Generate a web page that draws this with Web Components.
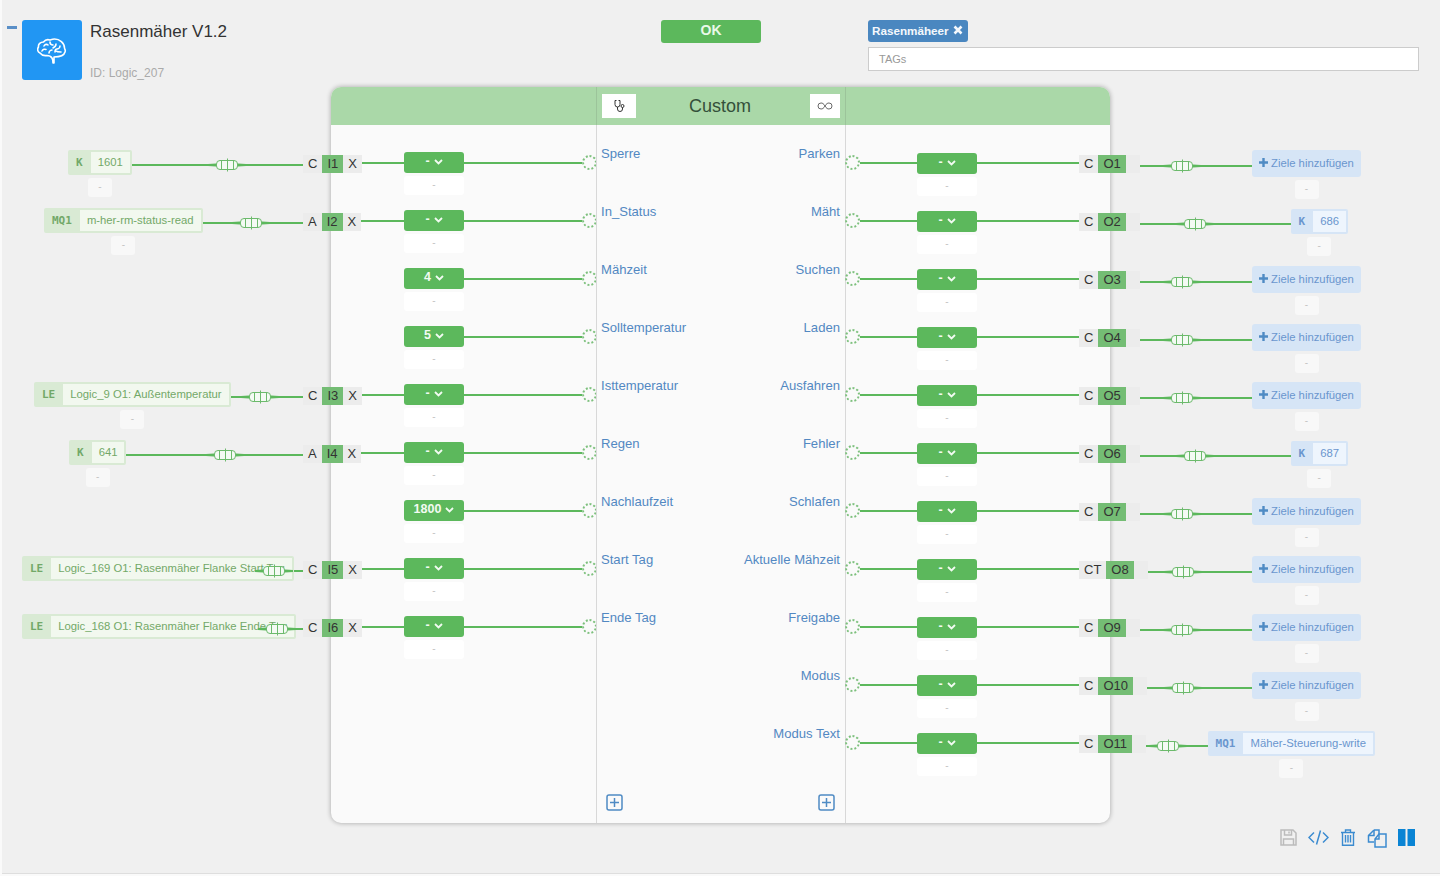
<!DOCTYPE html>
<html lang="de">
<head>
<meta charset="utf-8">
<title>Rasenmäher V1.2</title>
<style>
  html, body { margin: 0; background: #fafafa; overflow: hidden; }
  body { font-family: "Liberation Sans", Arial, sans-serif; }
</style>
</head>
<body>
<logic-node>
  <logic-head slot="head" title-text="Rasenmäher V1.2" logic-id="ID: Logic_207" tag="Rasenmäheer"></logic-head>
  <logic-block slot="block" title-text="Custom">
    <in-row slot="in" kind="K" name="1601" left="68" fuse="76" mode="C" port="I1"></in-row>
    <in-row slot="in" kind="MQ1" name="m-her-rm-status-read" left="44" fuse="52" mode="A" port="I2"></in-row>
    <in-row slot="in" value="4"></in-row>
    <in-row slot="in" value="5"></in-row>
    <in-row slot="in" kind="LE" name="Logic_9 O1: Außentemperatur" left="34" fuse="43" mode="C" port="I3"></in-row>
    <in-row slot="in" kind="K" name="641" left="69" fuse="78" mode="A" port="I4"></in-row>
    <in-row slot="in" value="1800"></in-row>
    <in-row slot="in" kind="LE" name="Logic_169 O1: Rasenmäher Flanke Start Tag" left="22" fuse="29" mode="C" port="I5" nosub></in-row>
    <in-row slot="in" kind="LE" name="Logic_168 O1: Rasenmäher Flanke Ende Tag" left="22" fuse="26" mode="C" port="I6" nosub></in-row>

    <pin-label slot="lab-l">Sperre</pin-label>
    <pin-label slot="lab-l">In_Status</pin-label>
    <pin-label slot="lab-l">Mähzeit</pin-label>
    <pin-label slot="lab-l">Solltemperatur</pin-label>
    <pin-label slot="lab-l">Isttemperatur</pin-label>
    <pin-label slot="lab-l">Regen</pin-label>
    <pin-label slot="lab-l">Nachlaufzeit</pin-label>
    <pin-label slot="lab-l">Start Tag</pin-label>
    <pin-label slot="lab-l">Ende Tag</pin-label>

    <pin-label slot="lab-r" end>Parken</pin-label>
    <pin-label slot="lab-r" end>Mäht</pin-label>
    <pin-label slot="lab-r" end>Suchen</pin-label>
    <pin-label slot="lab-r" end>Laden</pin-label>
    <pin-label slot="lab-r" end>Ausfahren</pin-label>
    <pin-label slot="lab-r" end>Fehler</pin-label>
    <pin-label slot="lab-r" end>Schlafen</pin-label>
    <pin-label slot="lab-r" end>Aktuelle Mähzeit</pin-label>
    <pin-label slot="lab-r" end>Freigabe</pin-label>
    <pin-label slot="lab-r" end>Modus</pin-label>
    <pin-label slot="lab-r" end>Modus Text</pin-label>

    <out-row slot="out" mode="C" port="O1" fuse="42"></out-row>
    <out-row slot="out" mode="C" port="O2" fuse="55" kind="K" name="686" right="92"></out-row>
    <out-row slot="out" mode="C" port="O3" fuse="42"></out-row>
    <out-row slot="out" mode="C" port="O4" fuse="42"></out-row>
    <out-row slot="out" mode="C" port="O5" fuse="42"></out-row>
    <out-row slot="out" mode="C" port="O6" fuse="55" kind="K" name="687" right="92"></out-row>
    <out-row slot="out" mode="C" port="O7" fuse="42"></out-row>
    <out-row slot="out" mode="CT" port="O8" fuse="35"></out-row>
    <out-row slot="out" mode="C" port="O9" fuse="42"></out-row>
    <out-row slot="out" mode="C" port="O10" fuse="36"></out-row>
    <out-row slot="out" mode="C" port="O11" fuse="22" kind="MQ1" name="Mäher-Steuerung-write" right="65"></out-row>
  </logic-block>
  <logic-tools slot="tools"></logic-tools>
</logic-node>

<script>
const FONT = '"Liberation Sans", Arial, sans-serif';

class LogicNode extends HTMLElement {
  constructor() {
    super();
    this.attachShadow({ mode: 'open' });
    this.shadowRoot.innerHTML = `
      <style>
      :host {
        display: flex;
        flex-direction: column;
        box-sizing: border-box;
        margin-left: 2px;
        height: 874px;
        background: #f0f0f0;
        border-bottom: 1px solid #dedede;
        font-family: ${FONT};
      }
      </style>
      <slot name="head"></slot>
      <slot name="block"></slot>
      <slot name="tools"></slot>
    `;
  }
}

class LogicHead extends HTMLElement {
  connectedCallback() {
    if (this.shadowRoot) return;
    this.attachShadow({ mode: 'open' });
    this.shadowRoot.innerHTML = `
      <style>
      :host { display: flex; height: 87px; box-sizing: border-box; padding-top: 20px; }
      .minus { width: 10px; height: 3px; margin: 6px 5px 0 5px; background: #5a8fc7; }
      .icon {
        width: 60px; height: 60px; border-radius: 3px; background: #2196f3;
        display: flex; align-items: center; justify-content: center;
      }
      .info { width: 579px; box-sizing: border-box; padding: 1px 0 0 8px; }
      .title { font-size: 17px; line-height: 22px; color: #333; }
      .id { font-size: 12px; line-height: 14px; margin-top: 23px; color: #aaa; }
      .ok {
        width: 100px; height: 23px; border-radius: 3px; background: #5cb85c; color: #e9f9e9;
        font-size: 14px; font-weight: bold; line-height: 20px; text-align: center;
      }
      .tags { width: 551px; margin-left: 107px; }
      .badge {
        display: flex; align-items: center; gap: 4px; box-sizing: border-box;
        width: 100px; height: 22px; padding: 0 0 2px 4px; border-radius: 3px;
        background: #4a87c0; color: #f4f8fc; font-size: 11.700px; font-weight: bold;
      }
      .input {
        box-sizing: border-box; height: 24px; margin-top: 5px; padding-left: 10px;
        background: #fff; border: 1px solid #ccc; color: #999; font-size: 11px; line-height: 22px;
      }
      </style>
      <div class="minus"></div>
      <div class="icon">
        <svg width="30" height="27" viewBox="0 0 30 27" fill="none" stroke="#fff" stroke-width="1.6" stroke-linecap="round" stroke-linejoin="round">
          <path d="M17 26v-6c5 0 10-1 11-5 1-2-.5-3-.5-4 0-5-5-9-10-9-2 0-3 .5-4.500 1-3-1-5 0-6.500 2-3 0-5.500 2-5 5-1.500 2-1 5 1.500 6 1.500 2 4 3 7 2.500 2 0 4 1 5 2.500 1 1.500 1 3 1 5z"/>
          <path d="M7 9c1-2 3-2 4-1M5 14c1-2 3-2 4-1.500M12 16c0-2 2-3 3-3M13 5c0 2 1 3 3 3M19 7c0 2-1 3-3 4M23 9c0 2-2 3-3 3s-2 1-2 3M24 15c-2 0-4 0-5-1"/>
        </svg>
      </div>
      <div class="info">
        <div class="title">${this.getAttribute('title-text')}</div>
        <div class="id">${this.getAttribute('logic-id')}</div>
      </div>
      <div class="ok">OK</div>
      <div class="tags">
        <div class="badge">${this.getAttribute('tag')}
          <svg width="10" height="10" viewBox="0 0 10 10"><path d="M1.500 1.500l7 7M8.500 1.500l-7 7" stroke="#f4f8fc" stroke-width="2.600"/></svg>
        </div>
        <div class="input">TAGs</div>
      </div>
    `;
  }
}

class LogicBlock extends HTMLElement {
  connectedCallback() {
    if (this.shadowRoot) return;
    this.attachShadow({ mode: 'open' });
    this.shadowRoot.innerHTML = `
      <style>
      :host {
        display: grid;
        grid-template-columns: 265px 250px 264px;
        grid-template-rows: 38px 1fr;
        width: 779px;
        height: 736px;
        margin-left: 329px;
        border-radius: 10px;
        background: #fafafa;
        box-shadow: 0 0 5px rgba(0, 0, 0, 0.32);
      }
      .hd { background: #aad8a8; }
      .hd.l { border-radius: 10px 0 0 0; }
      .hd.r { border-radius: 0 10px 0 0; }
      .hd.m {
        display: flex; align-items: flex-start; box-sizing: border-box;
        padding: 7px 5px 0; border-left: 1px solid #9cc49a; border-right: 1px solid #9cc49a;
      }
      .hbtn { height: 24px; background: #fff; display: flex; align-items: center; justify-content: center; }
      .hbtn.a { width: 34px; }
      .hbtn.b { width: 30px; }
      .name { flex: 1; padding-right: 6px; text-align: center; font-size: 18px; line-height: 24px; color: #34503a; }
      .col { padding-top: 25px; }
      .mid {
        display: flex; flex-direction: column; box-sizing: border-box;
        border-left: 1px solid #d8d8d8; border-right: 1px solid #d8d8d8;
      }
      .labs { flex: 1; display: flex; justify-content: space-between; padding: 21px 5px 0 4px; }
      .labs div { display: flex; flex-direction: column; }
      .foot { display: flex; justify-content: space-between; padding: 0 10px 12px 9px; }
      </style>
      <div class="hd l"></div>
      <div class="hd m">
        <div class="hbtn a">
          <svg width="14" height="14" viewBox="0 0 14 14" fill="none" stroke="#333" stroke-width="1">
            <path d="M4.500 1.500H3V5.500a2.500 2.500 0 0 0 5 0V1.500H6.500"/>
            <path d="M5.500 8v2a2.500 2.500 0 0 0 5 0V8.500"/>
            <circle cx="10.500" cy="7" r="1.500"/>
          </svg>
        </div>
        <div class="name">${this.getAttribute('title-text')}</div>
        <div class="hbtn b">
          <svg width="16" height="8" viewBox="0 0 16 8" fill="none" stroke="#444" stroke-width="0.800">
            <path d="M8 4C6.500 1.500 5.500 1 4 1a3 3 0 0 0 0 6c1.500 0 2.500-.5 4-3s2.500-3 4-3a3 3 0 0 1 0 6c-1.500 0-2.500-.5-4-3z"/>
          </svg>
        </div>
      </div>
      <div class="hd r"></div>
      <div class="col"><slot name="in"></slot></div>
      <div class="mid">
        <div class="labs">
          <div><slot name="lab-l"></slot></div>
          <div><slot name="lab-r"></slot></div>
        </div>
        <div class="foot">
          <plus-box></plus-box>
          <plus-box></plus-box>
        </div>
      </div>
      <div class="col"><slot name="out"></slot></div>
    `;
  }
}

class PlusBox extends HTMLElement {
  constructor() {
    super();
    this.attachShadow({ mode: 'open' });
    this.shadowRoot.innerHTML = `
      <style>:host { display: block; width: 17px; height: 17px; }</style>
      <svg width="17" height="17" viewBox="0 0 17 17" fill="none" stroke="#4f8bc4" stroke-width="1.500">
        <rect x="1" y="1" width="15" height="15" rx="2"/>
        <path d="M8.500 4v9M4 8.500h9"/>
      </svg>
    `;
  }
}

class PinLabel extends HTMLElement {
  constructor() {
    super();
    this.attachShadow({ mode: 'open' });
    this.shadowRoot.innerHTML = `
      <style>
      :host { display: block; height: 58px; font-size: 13.100px; line-height: 16px; color: #5288c2; white-space: nowrap; }
      :host([end]) { text-align: right; }
      </style>
      <slot></slot>
    `;
  }
}

// wire with the little fuse symbol on it, offset comes from the row
class FuseWire extends HTMLElement {
  connectedCallback() {
    if (this.shadowRoot) return;
    const side = this.hasAttribute('from-right') ? 'right' : 'left';
    const at = Number(this.getAttribute('at')) - 19;
    this.attachShadow({ mode: 'open' });
    this.shadowRoot.innerHTML = `
      <style>
      :host { display: block; flex: 1; height: 2px; background: #5cb85c; position: relative; }
      svg { position: absolute; top: -6px; ${side}: ${at}px; z-index: 2; }
      </style>
      <svg width="38" height="14" viewBox="0 0 38 14" fill="none" stroke="#6cba6c" stroke-width="1">
        <path d="M0 6L8 5.500H30L38 6V8L30 8.500H8L0 8Z" fill="#5cb85c" stroke="none"/>
        <rect x="8.500" y="2.500" width="21" height="9" rx="3.500" fill="#f4faf4"/>
        <path d="M13.500 2.500v9M19.500 0.500v13M25.500 2.500v9"/>
      </svg>
    `;
  }
}

class PortChips extends HTMLElement {
  connectedCallback() {
    if (this.shadowRoot) return;
    const tail = this.getAttribute('tail');
    this.attachShadow({ mode: 'open' });
    this.shadowRoot.innerHTML = `
      <style>
      :host { display: flex; height: 18px; background: #ececec; font-size: 13px; line-height: 18px; color: #333; flex: none; }
      span { padding: 0 5px; }
      .port { background: #74bd74; }
      .rest { width: 4px; }
      </style>
      <span>${this.getAttribute('mode')}</span>
      <span class="port">${this.getAttribute('port')}</span>
      <span class="${tail === 'x' ? '' : 'rest'}">${tail === 'x' ? 'X' : ''}</span>
    `;
  }
}

class SubBox extends HTMLElement {
  constructor() {
    super();
    this.attachShadow({ mode: 'open' });
    this.shadowRoot.innerHTML = `
      <style>
      :host {
        display: block; width: 24px; height: 19px; margin-top: 3px; border-radius: 3px;
        background: #f8f8f8; color: #c4c4c4; font-size: 10px; line-height: 17px; text-align: center;
      }
      :host([wide]) { width: 60px; background: #fff; }
      </style>-
    `;
  }
}

class ValBtn extends HTMLElement {
  connectedCallback() {
    if (this.shadowRoot) return;
    const v = this.getAttribute('value') || '-';
    this.attachShadow({ mode: 'open' });
    this.shadowRoot.innerHTML = `
      <style>
      :host { display: block; width: 60px; flex: none; margin-top: ${this.getAttribute('top')}px; }
      .b {
        height: 21px; border-radius: 3px; background: #5cb85c; color: #f2fbf2;
        display: flex; align-items: center; justify-content: center; gap: 4px;
        font-size: 12.500px; font-weight: bold; padding-bottom: 3px; box-sizing: border-box;
      }
      svg { margin-top: 2px; }
      </style>
      <div class="b">${v}
        <svg width="9" height="6" viewBox="0 0 9 6" fill="none" stroke="#f2fbf2" stroke-width="1.800"><path d="M1 1l3.500 3.500L8 1"/></svg>
      </div>
      <sub-box wide></sub-box>
    `;
  }
}

// source / target chip: mono prefix plus name, green on the left, blue on the right
class SigTag extends HTMLElement {
  connectedCallback() {
    if (this.shadowRoot) return;
    this.attachShadow({ mode: 'open' });
    this.shadowRoot.innerHTML = `
      <style>
      :host {
        display: flex; flex-direction: column; align-items: center; flex: none;
        --bg: #d9ead4; --in: #f2f8ef; --fg: #72a868;
      }
      :host([tone='blue']) { --bg: #d6e5f6; --in: #eef5fd; --fg: #6a96ce; }
      .t {
        display: flex; height: 25px; box-sizing: border-box; padding: 2px 2px 2px 0;
        background: var(--bg); border-radius: 2px; color: var(--fg); font-size: 11.300px; line-height: 20px;
        white-space: nowrap;
      }
      .k { padding: 1px 8px 0; font-family: "DejaVu Sans Mono", monospace; font-size: 11px; font-weight: bold; }
      .n { padding: 0 7px; background: var(--in); }
      </style>
      <div class="t"><span class="k">${this.getAttribute('kind')}</span><span class="n">${this.getAttribute('name')}</span></div>
      ${this.hasAttribute('nosub') ? '' : '<sub-box></sub-box>'}
    `;
  }
}

class AddTarget extends HTMLElement {
  constructor() {
    super();
    this.attachShadow({ mode: 'open' });
    this.shadowRoot.innerHTML = `
      <style>
      :host { display: flex; flex-direction: column; align-items: center; flex: none; }
      .t {
        display: flex; align-items: center; gap: 3px; box-sizing: border-box; width: 109px; height: 27px;
        padding: 0 0 2px 7px; border-radius: 3px; background: #d6e5f6; color: #6a96ce; font-size: 11.300px;
      }
      </style>
      <div class="t">
        <svg width="9" height="9" viewBox="0 0 9 9"><path d="M4.500 0v9M0 4.500h9" stroke="#4f8bc4" stroke-width="2.400"/></svg>
        Ziele hinzufügen
      </div>
      <sub-box></sub-box>
    `;
  }
}

class InRow extends HTMLElement {
  connectedCallback() {
    if (this.shadowRoot) return;
    const a = (n) => this.getAttribute(n);
    const linked = this.hasAttribute('port');
    this.attachShadow({ mode: 'open' });
    this.shadowRoot.innerHTML = `
      <style>
      :host { display: flex; height: 58px; margin-left: -329px; }
      .ext { display: flex; width: 402px; flex: none; align-items: flex-start; }
      .src { display: flex; width: 301px; flex: none; align-items: flex-start; }
      sig-tag { margin-left: ${Number(a('left')) - 2}px; }
      fuse-wire { margin-top: 14px; }
      port-chips { margin-top: 5px; }
      .w { height: 2px; background: #5cb85c; margin-top: 12px; }
      .stub { flex: 1; }
      .long { width: 118px; flex: none; }
      .dot { width: 15px; height: 15px; flex: none; box-sizing: border-box; margin-top: 5px; border: 2px dotted #7dc07d; border-radius: 50%; }
      </style>
      <div class="ext">
        ${linked ? `
        <div class="src">
          <sig-tag kind="${a('kind')}" name="${a('name')}" ${this.hasAttribute('nosub') ? 'nosub' : ''}></sig-tag>
          <fuse-wire from-right at="${a('fuse')}"></fuse-wire>
        </div>
        <port-chips mode="${a('mode')}" port="${a('port')}" tail="x"></port-chips>
        <div class="w stub"></div>` : ''}
      </div>
      <val-btn top="2" ${a('value') ? `value="${a('value')}"` : ''}></val-btn>
      <div class="w long"></div>
      <div class="dot"></div>
    `;
  }
}

class OutRow extends HTMLElement {
  connectedCallback() {
    if (this.shadowRoot) return;
    const a = (n) => this.getAttribute(n);
    const target = a('kind')
      ? `<sig-tag tone="blue" kind="${a('kind')}" name="${a('name')}" style="margin-top:1px"></sig-tag>`
      : '<add-target></add-target>';
    this.attachShadow({ mode: 'open' });
    this.shadowRoot.innerHTML = `
      <style>
      :host { display: flex; align-items: flex-start; height: 58px; margin: 0 -330px 0 -1px; padding-right: ${a('right') || 79}px; }
      .dot { width: 15px; height: 15px; flex: none; box-sizing: border-box; margin-top: 5px; border: 2px dotted #7dc07d; border-radius: 50%; }
      .w { height: 2px; background: #5cb85c; margin-top: 12px; flex: none; }
      .w1 { width: 57px; }
      .w2 { width: 102px; }
      port-chips { margin-top: 5px; }
      fuse-wire { margin-top: 15px; }
      </style>
      <div class="dot"></div>
      <div class="w w1"></div>
      <val-btn top="3"></val-btn>
      <div class="w w2"></div>
      <port-chips mode="${a('mode')}" port="${a('port')}" tail="rest"></port-chips>
      <fuse-wire at="${a('fuse')}"></fuse-wire>
      ${target}
    `;
  }
}

class LogicTools extends HTMLElement {
  constructor() {
    super();
    this.attachShadow({ mode: 'open' });
    this.shadowRoot.innerHTML = `
      <style>
      :host { display: flex; justify-content: flex-end; gap: 11px; margin: 6px 25px 0 0; }
      svg { display: block; }
      </style>
      <svg width="17" height="17" viewBox="0 0 17 17" fill="none" stroke="#bbb" stroke-width="1.500">
        <path d="M1 1h12l3 3v12H1z"/><path d="M4.500 1v5h7V1M9 2.500V4.500"/><path d="M3.500 16v-6h10v6"/>
      </svg>
      <svg width="21" height="17" viewBox="0 0 21 17" fill="none" stroke="#3b8bd0" stroke-width="1.500">
        <path d="M6 3.500L1 8.500l5 5M15 3.500l5 5-5 5M12.500 1.500l-4 14"/>
      </svg>
      <svg width="16" height="17" viewBox="0 0 16 17" fill="none" stroke="#3b8bd0" stroke-width="1.400">
        <path d="M1 3.500h14M5.500 3.500V1h5v2.500"/><path d="M2.500 3.500v12.700h11V3.500"/><path d="M5.500 6v7.500M8 6v7.500M10.500 6v7.500"/>
      </svg>
      <svg width="20" height="19" viewBox="0 0 20 19" fill="none" stroke="#3b8bd0" stroke-width="1.500">
        <path d="M7 1h5v4M7 1L1.500 6.500V13H7"/><path d="M7 1v5.500H1.500"/><path d="M12 5h7v13H8v-8z"/><path d="M12 5v5H8"/>
      </svg>
      <svg width="17" height="17" viewBox="0 0 17 17" fill="#0a84d4"><rect width="7.500" height="17"/><rect x="9.500" width="7.500" height="17"/></svg>
    `;
  }
}

customElements.define('logic-node', LogicNode);
customElements.define('logic-head', LogicHead);
customElements.define('logic-block', LogicBlock);
customElements.define('plus-box', PlusBox);
customElements.define('pin-label', PinLabel);
customElements.define('fuse-wire', FuseWire);
customElements.define('port-chips', PortChips);
customElements.define('sub-box', SubBox);
customElements.define('val-btn', ValBtn);
customElements.define('sig-tag', SigTag);
customElements.define('add-target', AddTarget);
customElements.define('in-row', InRow);
customElements.define('out-row', OutRow);
customElements.define('logic-tools', LogicTools);
</script>
</body>
</html>
